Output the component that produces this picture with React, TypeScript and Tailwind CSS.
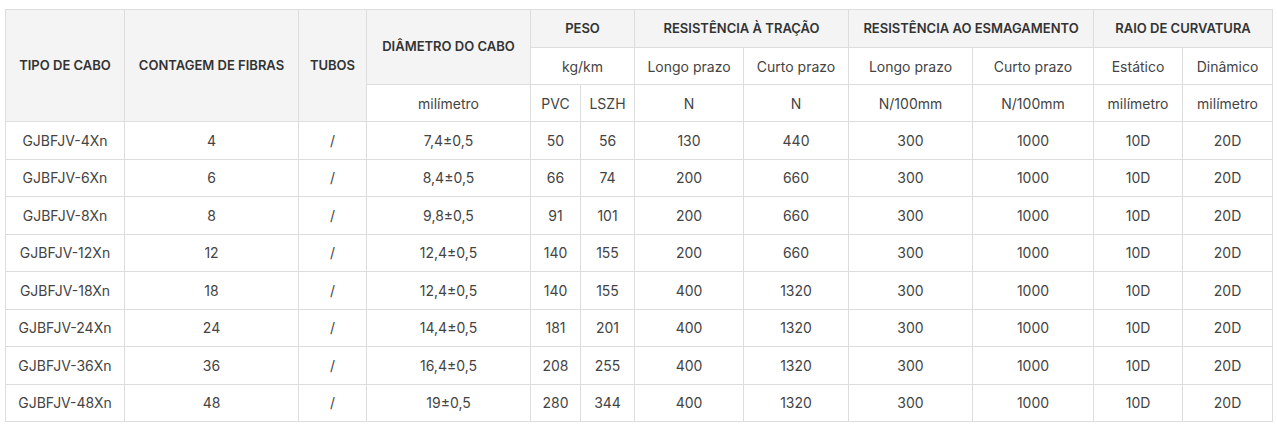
const rows = [
  ['GJBFJV-4Xn', '4', '/', '7,4±0,5', '50', '56', '130', '440', '300', '1000', '10D', '20D'],
  ['GJBFJV-6Xn', '6', '/', '8,4±0,5', '66', '74', '200', '660', '300', '1000', '10D', '20D'],
  ['GJBFJV-8Xn', '8', '/', '9,8±0,5', '91', '101', '200', '660', '300', '1000', '10D', '20D'],
  ['GJBFJV-12Xn', '12', '/', '12,4±0,5', '140', '155', '200', '660', '300', '1000', '10D', '20D'],
  ['GJBFJV-18Xn', '18', '/', '12,4±0,5', '140', '155', '400', '1320', '300', '1000', '10D', '20D'],
  ['GJBFJV-24Xn', '24', '/', '14,4±0,5', '181', '201', '400', '1320', '300', '1000', '10D', '20D'],
  ['GJBFJV-36Xn', '36', '/', '16,4±0,5', '208', '255', '400', '1320', '300', '1000', '10D', '20D'],
  ['GJBFJV-48Xn', '48', '/', '19±0,5', '280', '344', '400', '1320', '300', '1000', '10D', '20D'],
];

const widths = [119, 174, 68, 164, 50, 54, 109, 105, 124, 121, 89, 90];

const th = 'border border-[#dddddd] bg-[#f4f4f4] font-semibold text-[13px] text-[#333333] uppercase text-center align-middle';
const sub = 'border border-[#dddddd] font-normal text-[14px] text-[#444444] text-center align-middle';
const td = 'border border-[#dddddd] text-[14px] text-[#444444] text-center align-middle h-[37.5px] p-0';

export default function App() {
  return (
    <div className="bg-white w-[1277px] h-[424px] pt-[9px] pl-[5px] font-['Inter','Liberation_Sans',sans-serif]">
      <table className="border-collapse table-fixed w-[1267px]">
        <colgroup>
          {widths.map((w, i) => (
            <col key={i} style={{ width: w }} />
          ))}
        </colgroup>
        <thead>
          <tr className="h-[38px]">
            <th rowSpan={3} className={th}>Tipo de cabo</th>
            <th rowSpan={3} className={th}>Contagem de fibras</th>
            <th rowSpan={3} className={th}>Tubos</th>
            <th rowSpan={2} className={th}>Diâmetro do cabo</th>
            <th colSpan={2} className={th}>Peso</th>
            <th colSpan={2} className={th}>Resistência à tração</th>
            <th colSpan={2} className={th}>Resistência ao esmagamento</th>
            <th colSpan={2} className={th}>Raio de curvatura</th>
          </tr>
          <tr className="h-[37px]">
            <th colSpan={2} className={sub}>kg/km</th>
            <th className={sub}>Longo prazo</th>
            <th className={sub}>Curto prazo</th>
            <th className={sub}>Longo prazo</th>
            <th className={sub}>Curto prazo</th>
            <th className={sub}>Estático</th>
            <th className={sub}>Dinâmico</th>
          </tr>
          <tr className="h-[37px]">
            <th className={sub}>milímetro</th>
            <th className={sub}>PVC</th>
            <th className={sub}>LSZH</th>
            <th className={sub}>N</th>
            <th className={sub}>N</th>
            <th className={sub}>N/100mm</th>
            <th className={sub}>N/100mm</th>
            <th className={sub}>milímetro</th>
            <th className={sub}>milímetro</th>
          </tr>
        </thead>
        <tbody>
          {rows.map((r) => (
            <tr key={r[0]}>
              {r.map((c, i) => (
                <td key={i} className={td}>
                  {c}
                </td>
              ))}
            </tr>
          ))}
        </tbody>
      </table>
    </div>
  );
}
